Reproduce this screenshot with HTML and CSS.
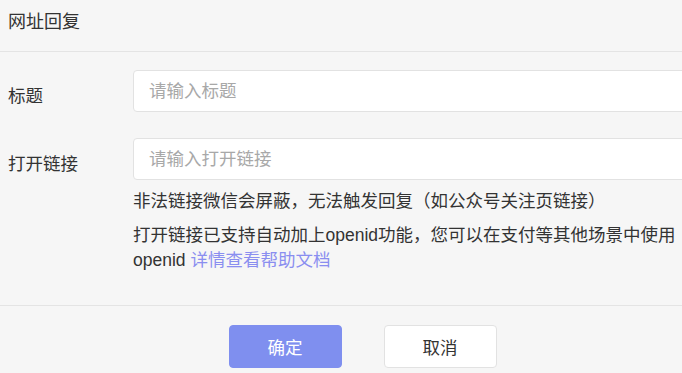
FILE: index.html
```html
<!DOCTYPE html>
<html lang="zh-CN">
<head>
  <meta charset="UTF-8">
  <title>网址回复</title>
  <link rel="stylesheet" href="styles.css">
</head>
<body>
  <div class="dialog">
    <div class="dialog-header">网址回复</div>

    <div class="dialog-body">
      <div class="form-row">
        <label class="form-label" for="title">标题</label>
        <div class="form-field">
          <input type="text" id="title" placeholder="请输入标题">
        </div>
      </div>

      <div class="form-row">
        <label class="form-label" for="link">打开链接</label>
        <div class="form-field">
          <input type="text" id="link" placeholder="请输入打开链接">
          <p class="hint">非法链接微信会屏蔽，无法触发回复（如公众号关注页链接）</p>
          <p class="hint">打开链接已支持自动加上openid功能，您可以在支付等其他场景中使用openid <a href="#">详情查看帮助文档</a></p>
        </div>
      </div>
    </div>

    <div class="dialog-footer">
      <button class="primary">确定</button>
      <button class="secondary">取消</button>
    </div>
  </div>
</body>
</html>
```

FILE: styles.css
```css
body {
  margin: 0;
  padding: 0;
  background-color: #f6f6f6;
  font-family: "Liberation Sans", "Noto Sans CJK SC", sans-serif;
  color: #333;
  overflow: hidden;
}

.dialog {
  width: 725px;
}

.dialog-header {
  height: 52px;
  box-sizing: border-box;
  padding: 9px 8px 0;
  font-size: 18px;
  line-height: 26px;
  border-bottom: 1px solid #e4e4e4;
}

.dialog-body {
  padding: 18px 0 0;
}

.form-row {
  display: flex;
  margin-bottom: 26px;
}

.form-row:last-child {
  margin-bottom: 0;
}

.form-label {
  width: 125px;
  flex-shrink: 0;
  padding: 13px 0 0 8px;
  font-size: 17.5px;
  line-height: 26px;
}

.form-field {
  flex: 1;
}

.form-field input {
  display: block;
  width: 100%;
  height: 42px;
  box-sizing: border-box;
  padding: 0 15px;
  border: 1px solid #e2e2e2;
  border-radius: 4px;
  background-color: #fff;
  font-family: inherit;
  font-size: 17.5px;
  color: #333;
  outline: none;
}

.form-field input::placeholder {
  color: #a8a8a8;
}

.hint {
  margin: 0;
  font-size: 17.5px;
  line-height: 25px;
  padding-right: 40px;
}

.form-field input + .hint {
  margin-top: 9px;
}

.hint + .hint {
  margin-top: 9px;
}

.hint a {
  color: #8a8ef0;
  text-decoration: none;
}

.dialog-footer {
  margin-top: 32px;
  padding-top: 19px;
  border-top: 1px solid #e4e4e4;
  display: flex;
  justify-content: center;
  gap: 42px;
}

button {
  width: 113px;
  height: 43px;
  border-radius: 4px;
  font-family: inherit;
  font-size: 17.5px;
  cursor: pointer;
}

button.primary {
  background-color: #7f8fef;
  border: 1px solid #7f8fef;
  color: #fff;
}

button.secondary {
  background-color: #fff;
  border: 1px solid #e2e2e2;
  color: #333;
}
```
